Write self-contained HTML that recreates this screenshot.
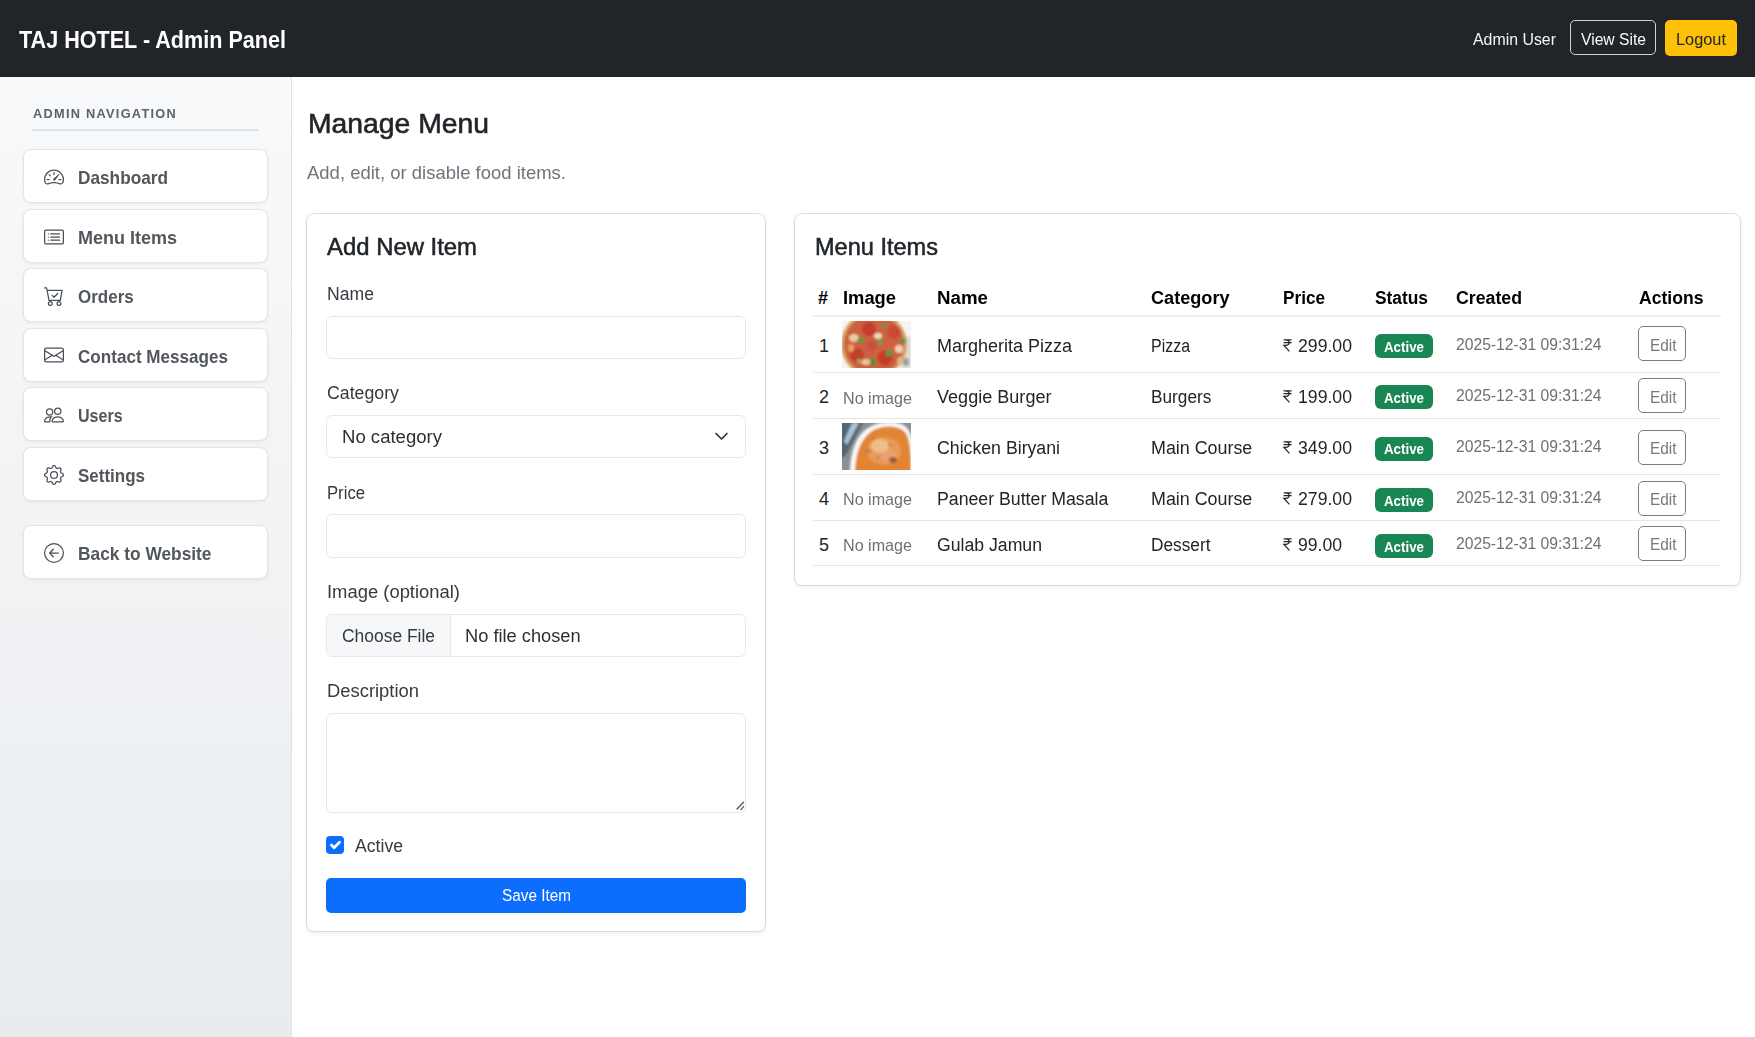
<!DOCTYPE html>
<html><head><meta charset="utf-8"><style>
html,body{margin:0;padding:0;width:1755px;height:1037px;overflow:hidden;background:#fff;}
body{position:relative;font-family:"Liberation Sans",sans-serif;}
.t{position:absolute;white-space:nowrap;line-height:1;transform-origin:0 0;}
.b{position:absolute;box-sizing:border-box;}
svg.b{overflow:visible;}
</style></head><body>
<div class="b" style="left:0px;top:0px;width:1755px;height:77px;background:#212529;"></div>
<div class="t" style="left:19.00px;top:27.88px;font-size:24px;color:#fff;font-weight:700;transform:scaleX(0.8992);">TAJ HOTEL - Admin Panel</div>
<div class="t" style="left:1473.00px;top:30.81px;font-size:17px;color:#f1f3f5;transform:scaleX(0.9346);">Admin User</div>
<div class="b" style="left:1570px;top:20px;width:86px;height:35px;border:1px solid #ced4da;border-radius:5px;box-sizing:border-box;"></div>
<div class="t" style="left:1581.00px;top:30.81px;font-size:17px;color:#f8f9fa;transform:scaleX(0.9212);">View Site</div>
<div class="b" style="left:1665px;top:20px;width:72px;height:36px;background:#ffc107;border-radius:5px;"></div>
<div class="t" style="left:1676.00px;top:30.81px;font-size:17px;color:#212529;transform:scaleX(0.9616);">Logout</div>
<div class="b" style="left:0px;top:77px;width:291px;height:960px;background:linear-gradient(#f8f9fa,#e9ecef);"></div>
<div class="b" style="left:291px;top:77px;width:1px;height:960px;background:#e2e3e5;"></div>
<div class="t" style="left:33.00px;top:106.69px;font-size:13px;color:#5c6268;font-weight:700;transform:scaleX(0.9816);letter-spacing:1.3px;">ADMIN NAVIGATION</div>
<div class="b" style="left:32px;top:129px;width:227px;height:2px;background:#dee2e6;"></div>
<div class="b" style="left:23px;top:149px;width:245px;height:54px;background:#fff;border-radius:8px;border:1px solid #e3e4e6;box-sizing:border-box;box-shadow:0 1px 3px rgba(0,0,0,.06);"></div>
<svg class="b" style="left:44px;top:167px;" width="20" height="20" viewBox="0 0 16 16"><g fill="#495057"><path d="M8 4a.5.5 0 0 1 .5.5V6a.5.5 0 0 1-1 0V4.5A.5.5 0 0 1 8 4M3.732 5.732a.5.5 0 0 1 .707 0l.915.914a.5.5 0 1 1-.708.708l-.914-.915a.5.5 0 0 1 0-.707M2 10a.5.5 0 0 1 .5-.5h1.586a.5.5 0 0 1 0 1H2.5A.5.5 0 0 1 2 10m9.5 0a.5.5 0 0 1 .5-.5h1.5a.5.5 0 0 1 0 1H12a.5.5 0 0 1-.5-.5m.754-4.246a.39.39 0 0 0-.527-.02L7.547 9.31a.91.91 0 1 0 1.302 1.258l3.434-4.297a.39.39 0 0 0-.029-.518z"/><path fill-rule="evenodd" d="M0 10a8 8 0 1 1 15.547 2.661c-.442 1.253-1.845 1.602-2.932 1.25C11.309 13.488 9.475 13 8 13c-1.474 0-3.31.488-4.615.911-1.087.352-2.49.003-2.932-1.25A8 8 0 0 1 0 10m8-7a7 7 0 0 0-6.603 9.329c.203.575.923.876 1.68.63C4.397 12.533 6.358 12 8 12s3.604.532 4.923.96c.757.245 1.477-.056 1.68-.631A7 7 0 0 0 8 3"/></g></svg>
<div class="t" style="left:78.00px;top:169.34px;font-size:18.5px;color:#51575d;font-weight:700;transform:scaleX(0.9314);">Dashboard</div>
<div class="b" style="left:23px;top:209px;width:245px;height:54px;background:#fff;border-radius:8px;border:1px solid #e3e4e6;box-sizing:border-box;box-shadow:0 1px 3px rgba(0,0,0,.06);"></div>
<svg class="b" style="left:44px;top:227px;" width="20" height="20" viewBox="0 0 16 16"><g fill="#495057"><path d="M14.5 3a.5.5 0 0 1 .5.5v9a.5.5 0 0 1-.5.5h-13a.5.5 0 0 1-.5-.5v-9a.5.5 0 0 1 .5-.5zm-13-1A1.5 1.5 0 0 0 0 3.5v9A1.5 1.5 0 0 0 1.5 14h13a1.5 1.5 0 0 0 1.5-1.5v-9A1.5 1.5 0 0 0 14.5 2z"/><path d="M5 8a.5.5 0 0 1 .5-.5h7a.5.5 0 0 1 0 1h-7A.5.5 0 0 1 5 8m0-2.5a.5.5 0 0 1 .5-.5h7a.5.5 0 0 1 0 1h-7a.5.5 0 0 1-.5-.5m0 5a.5.5 0 0 1 .5-.5h7a.5.5 0 0 1 0 1h-7a.5.5 0 0 1-.5-.5m-1-5a.5.5 0 1 1-1 0 .5.5 0 0 1 1 0M4 8a.5.5 0 1 1-1 0 .5.5 0 0 1 1 0m0 2.5a.5.5 0 1 1-1 0 .5.5 0 0 1 1 0"/></g></svg>
<div class="t" style="left:78.00px;top:228.84px;font-size:18.5px;color:#51575d;font-weight:700;transform:scaleX(0.9728);">Menu Items</div>
<div class="b" style="left:23px;top:268px;width:245px;height:54px;background:#fff;border-radius:8px;border:1px solid #e3e4e6;box-sizing:border-box;box-shadow:0 1px 3px rgba(0,0,0,.06);"></div>
<svg class="b" style="left:44px;top:286px;" width="20" height="20" viewBox="0 0 16 16"><g fill="#495057"><path d="M11.354 6.354a.5.5 0 0 0-.708-.708L8 8.293 6.854 7.146a.5.5 0 1 0-.708.708l1.5 1.5a.5.5 0 0 0 .708 0z"/><path d="M.5 1a.5.5 0 0 0 0 1h1.11l.401 1.607 1.498 7.985A.5.5 0 0 0 4 12h1a2 2 0 1 0 0 4 2 2 0 0 0 0-4h7a2 2 0 1 0 0 4 2 2 0 0 0 0-4h1a.5.5 0 0 0 .491-.408l1.5-8A.5.5 0 0 0 14.5 3H2.89l-.405-1.621A.5.5 0 0 0 2 1zm3.915 10L3.102 4h10.796l-1.313 7zM6 14a1 1 0 1 1-2 0 1 1 0 0 1 2 0m7 0a1 1 0 1 1-2 0 1 1 0 0 1 2 0"/></g></svg>
<div class="t" style="left:78.00px;top:288.34px;font-size:18.5px;color:#51575d;font-weight:700;transform:scaleX(0.9181);">Orders</div>
<div class="b" style="left:23px;top:328px;width:245px;height:54px;background:#fff;border-radius:8px;border:1px solid #e3e4e6;box-sizing:border-box;box-shadow:0 1px 3px rgba(0,0,0,.06);"></div>
<svg class="b" style="left:44px;top:345px;" width="20" height="20" viewBox="0 0 16 16"><g fill="#495057"><path d="M0 4a2 2 0 0 1 2-2h12a2 2 0 0 1 2 2v8a2 2 0 0 1-2 2H2a2 2 0 0 1-2-2zm2-1a1 1 0 0 0-1 1v.217l7 4.2 7-4.2V4a1 1 0 0 0-1-1zm13 2.383-4.708 2.825L15 11.105zm-.034 6.876-5.64-3.471L8 9.583l-1.326-.795-5.64 3.470A1 1 0 0 0 2 13h12a1 1 0 0 0 .966-.741M1 11.105l4.708-2.897L1 5.383z"/></g></svg>
<div class="t" style="left:78.00px;top:347.84px;font-size:18.5px;color:#51575d;font-weight:700;transform:scaleX(0.9234);">Contact Messages</div>
<div class="b" style="left:23px;top:387px;width:245px;height:54px;background:#fff;border-radius:8px;border:1px solid #e3e4e6;box-sizing:border-box;box-shadow:0 1px 3px rgba(0,0,0,.06);"></div>
<svg class="b" style="left:44px;top:405px;" width="20" height="20" viewBox="0 0 16 16"><g fill="#495057"><path d="M15 14s1 0 1-1-1-4-5-4-5 3-5 4 1 1 1 1zm-7.978-1L7 12.996c.001-.264.167-1.03.76-1.72C8.312 10.629 9.282 10 11 10c1.717 0 2.687.63 3.24 1.276.593.69.758 1.457.76 1.72l-.008.002-.014.002zM11 7a2 2 0 1 0 0-4 2 2 0 0 0 0 4m3-2a3 3 0 1 1-6 0 3 3 0 0 1 6 0M6.936 9.28a6 6 0 0 0-1.23-.247A7 7 0 0 0 5 9c-4 0-5 3-5 4q0 1 1 1h4.216A2.240 2.240 0 0 1 5 13c0-1.010.377-2.042 1.090-2.904.243-.294.526-.569.846-.816M4.920 10A5.500 5.500 0 0 0 4 13H1c0-.26.164-1.030.760-1.724.545-.636 1.492-1.256 3.160-1.275ZM1.500 5.500a3 3 0 1 1 6 0 3 3 0 0 1-6 0m3-2a2 2 0 1 0 0 4 2 2 0 0 0 0-4"/></g></svg>
<div class="t" style="left:78.00px;top:407.34px;font-size:18.5px;color:#51575d;font-weight:700;transform:scaleX(0.8672);">Users</div>
<div class="b" style="left:23px;top:447px;width:245px;height:54px;background:#fff;border-radius:8px;border:1px solid #e3e4e6;box-sizing:border-box;box-shadow:0 1px 3px rgba(0,0,0,.06);"></div>
<svg class="b" style="left:44px;top:465px;" width="20" height="20" viewBox="0 0 16 16"><g fill="#495057"><path d="M8 4.754a3.246 3.246 0 1 0 0 6.492 3.246 3.246 0 0 0 0-6.492M5.754 8a2.246 2.246 0 1 1 4.492 0 2.246 2.246 0 0 1-4.492 0"/><path d="M9.796 1.343c-.527-1.790-3.065-1.790-3.592 0l-.094.319a.873.873 0 0 1-1.255.52l-.292-.16c-1.640-.892-3.433.902-2.540 2.541l.159.292a.873.873 0 0 1-.52 1.255l-.319.094c-1.790.527-1.790 3.065 0 3.592l.319.094a.873.873 0 0 1 .52 1.255l-.16.292c-.892 1.640.901 3.434 2.541 2.540l.292-.159a.873.873 0 0 1 1.255.52l.094.319c.527 1.790 3.065 1.790 3.592 0l.094-.319a.873.873 0 0 1 1.255-.52l.292.16c1.640.893 3.434-.902 2.540-2.541l-.159-.292a.873.873 0 0 1 .52-1.255l.319-.094c1.790-.527 1.790-3.065 0-3.592l-.319-.094a.873.873 0 0 1-.52-1.255l.16-.292c.893-1.640-.902-3.433-2.541-2.540l-.292.159a.873.873 0 0 1-1.255-.52zm-2.633.283c.246-.835 1.428-.835 1.674 0l.094.319a1.873 1.873 0 0 0 2.693 1.115l.291-.16c.764-.415 1.6.42 1.184 1.185l-.159.292a1.873 1.873 0 0 0 1.116 2.692l.318.094c.835.246.835 1.428 0 1.674l-.319.094a1.873 1.873 0 0 0-1.115 2.693l.16.291c.415.764-.42 1.6-1.185 1.184l-.291-.159a1.873 1.873 0 0 0-2.693 1.116l-.094.318c-.246.835-1.428.835-1.674 0l-.094-.319a1.873 1.873 0 0 0-2.692-1.115l-.292.16c-.764.415-1.6-.42-1.184-1.185l.159-.291A1.873 1.873 0 0 0 1.945 8.930l-.319-.094c-.835-.246-.835-1.428 0-1.674l.319-.094A1.873 1.873 0 0 0 3.060 4.377l-.16-.292c-.415-.764.42-1.6 1.185-1.184l.292.159a1.873 1.873 0 0 0 2.692-1.115z"/></g></svg>
<div class="t" style="left:78.00px;top:466.84px;font-size:18.5px;color:#51575d;font-weight:700;transform:scaleX(0.9180);">Settings</div>
<div class="b" style="left:23px;top:525px;width:245px;height:54px;background:#fff;border-radius:8px;border:1px solid #e3e4e6;box-sizing:border-box;box-shadow:0 1px 3px rgba(0,0,0,.06);"></div>
<svg class="b" style="left:44px;top:543px;" width="20" height="20" viewBox="0 0 16 16"><g fill="#495057"><path fill-rule="evenodd" d="M1 8a7 7 0 1 0 14 0A7 7 0 0 0 1 8m15 0A8 8 0 1 1 0 8a8 8 0 0 1 16 0m-4.5-.5a.5.5 0 0 1 0 1H5.707l2.147 2.146a.5.5 0 0 1-.708.708l-3-3a.5.5 0 0 1 0-.708l3-3a.5.5 0 1 1 .708.708L5.707 7.5z"/></g></svg>
<div class="t" style="left:78.00px;top:544.84px;font-size:18.5px;color:#51575d;font-weight:700;transform:scaleX(0.9364);">Back to Website</div>
<div class="t" style="left:308.00px;top:109.37px;font-size:28.5px;color:#212529;transform:scaleX(0.9934);-webkit-text-stroke:0.6px #212529;">Manage Menu</div>
<div class="t" style="left:307.00px;top:162.61px;font-size:19px;color:#6c757d;transform:scaleX(0.9731);">Add, edit, or disable food items.</div>
<div class="b" style="left:306px;top:213px;width:460px;height:719px;background:#fff;border:1px solid #dcdcdc;border-radius:8px;box-sizing:border-box;box-shadow:0 2px 4px rgba(0,0,0,.06);"></div>
<div class="t" style="left:327.00px;top:235.63px;font-size:23px;color:#212529;transform:scaleX(1.0384);-webkit-text-stroke:0.5px #212529;">Add New Item</div>
<div class="t" style="left:327.00px;top:285.88px;font-size:17.5px;color:#343a40;transform:scaleX(1.0068);">Name</div>
<div class="t" style="left:327.00px;top:384.88px;font-size:17.5px;color:#343a40;transform:scaleX(1.0139);">Category</div>
<div class="t" style="left:327.00px;top:484.88px;font-size:17.5px;color:#343a40;transform:scaleX(0.9530);">Price</div>
<div class="t" style="left:327.00px;top:583.88px;font-size:17.5px;color:#343a40;transform:scaleX(1.0517);">Image (optional)</div>
<div class="t" style="left:327.00px;top:683.48px;font-size:17.5px;color:#343a40;transform:scaleX(1.0510);">Description</div>
<div class="b" style="left:326px;top:316px;width:420px;height:43px;background:#fff;border:1px solid #e8e8e8;border-radius:6px;box-sizing:border-box;"></div>
<div class="b" style="left:326px;top:415px;width:420px;height:43px;background:#fff;border:1px solid #e8e8e8;border-radius:6px;box-sizing:border-box;"></div>
<div class="t" style="left:342.00px;top:429.48px;font-size:17.5px;color:#2b3035;transform:scaleX(1.0598);">No category</div>
<svg class="b" style="left:715px;top:432px;" width="13" height="9" viewBox="0 0 13 9"><path fill="none" stroke="#333" stroke-linecap="round" stroke-linejoin="round" stroke-width="1.7" d="M1 1.5 6.5 7 12 1.5"/></svg>
<div class="b" style="left:326px;top:514px;width:420px;height:44px;background:#fff;border:1px solid #e8e8e8;border-radius:6px;box-sizing:border-box;"></div>
<div class="b" style="left:326px;top:614px;width:420px;height:43px;background:#fff;border:1px solid #e8e8e8;border-radius:6px;box-sizing:border-box;overflow:hidden;"><div style="position:absolute;left:0;top:0;width:124px;height:100%;background:#f6f7f8;border-right:1px solid #e6e6e6;box-sizing:border-box;"></div></div>
<div class="t" style="left:341.50px;top:627.88px;font-size:17.5px;color:#343a40;transform:scaleX(0.9959);">Choose File</div>
<div class="t" style="left:465.00px;top:627.88px;font-size:17.5px;color:#2b3035;transform:scaleX(1.0424);">No file chosen</div>
<div class="b" style="left:326px;top:713px;width:420px;height:100px;background:#fff;border:1px solid #e8e8e8;border-radius:6px;box-sizing:border-box;"></div>
<svg class="b" style="left:736px;top:801px;" width="9" height="9" viewBox="0 0 9 9"><path d="M1 8 7.5 1.3M5 8.6 7.6 5.6" stroke="#555" stroke-width="1.3" stroke-linecap="round"/></svg>
<div class="b" style="left:326px;top:836px;width:18px;height:18px;background:#0d6efd;border-radius:4px;"></div>
<svg class="b" style="left:326px;top:836px;" width="18" height="18" viewBox="0 0 20 20"><path fill="none" stroke="#fff" stroke-linecap="round" stroke-linejoin="round" stroke-width="3" d="m6 10 3 3 6-6"/></svg>
<div class="t" style="left:355.00px;top:837.88px;font-size:17.5px;color:#343a40;transform:scaleX(1.0072);">Active</div>
<div class="b" style="left:326px;top:878px;width:420px;height:35px;background:#0d6efd;border-radius:5px;"></div>
<div class="t" style="left:502.00px;top:887.98px;font-size:16.8px;color:#fff;transform:scaleX(0.9123);">Save Item</div>
<div class="b" style="left:794px;top:213px;width:947px;height:373px;background:#fff;border:1px solid #dcdcdc;border-radius:8px;box-sizing:border-box;box-shadow:0 2px 4px rgba(0,0,0,.06);"></div>
<div class="t" style="left:815.00px;top:235.83px;font-size:23px;color:#212529;transform:scaleX(1.0237);-webkit-text-stroke:0.5px #212529;">Menu Items</div>
<div class="t" style="left:818.00px;top:289.26px;font-size:18px;color:#000;font-weight:700;">#</div>
<div class="t" style="left:843.00px;top:289.26px;font-size:18px;color:#000;font-weight:700;transform:scaleX(1.0188);">Image</div>
<div class="t" style="left:936.50px;top:289.26px;font-size:18px;color:#000;font-weight:700;transform:scaleX(1.0403);">Name</div>
<div class="t" style="left:1151.00px;top:289.26px;font-size:18px;color:#000;font-weight:700;transform:scaleX(1.0061);">Category</div>
<div class="t" style="left:1283.00px;top:289.26px;font-size:18px;color:#000;font-weight:700;transform:scaleX(0.9538);">Price</div>
<div class="t" style="left:1375.00px;top:289.26px;font-size:18px;color:#000;font-weight:700;transform:scaleX(0.9634);">Status</div>
<div class="t" style="left:1455.50px;top:289.26px;font-size:18px;color:#000;font-weight:700;transform:scaleX(0.9847);">Created</div>
<div class="t" style="left:1639.00px;top:289.26px;font-size:18px;color:#000;font-weight:700;transform:scaleX(0.9772);">Actions</div>
<div class="b" style="left:813px;top:315px;width:908px;height:2px;background:#efefef;"></div>
<div class="b" style="left:813px;top:372px;width:908px;height:1px;background:#e6e6e6;"></div>
<div class="b" style="left:813px;top:418px;width:908px;height:1px;background:#e6e6e6;"></div>
<div class="b" style="left:813px;top:474px;width:908px;height:1px;background:#e6e6e6;"></div>
<div class="b" style="left:813px;top:520px;width:908px;height:1px;background:#e6e6e6;"></div>
<div class="b" style="left:813px;top:565px;width:908px;height:1px;background:#e6e6e6;"></div>
<div class="t" style="left:819.00px;top:337.46px;font-size:18px;color:#212529;">1</div>
<div class="t" style="left:936.50px;top:337.46px;font-size:18px;color:#212529;transform:scaleX(0.9996);">Margherita Pizza</div>
<div class="t" style="left:1151.00px;top:337.46px;font-size:18px;color:#212529;transform:scaleX(0.8860);">Pizza</div>
<svg class="b" style="left:1283px;top:339px;" width="9" height="13" viewBox="0 0 9 13"><path d="M0.6 0.8H8.6M0.6 3.6H8.6M0.6 0.8H2.6C5 0.8 6.1 2 6.1 3.6S5 6.4 2.6 6.4H0.9L6.4 12.4" fill="none" stroke="#212529" stroke-width="1.25"/></svg>
<div class="t" style="left:1298.00px;top:337.46px;font-size:18px;color:#212529;transform:scaleX(0.9808);">299.00</div>
<div class="b" style="left:1374.5px;top:334px;width:58.5px;height:24px;background:#198754;border-radius:6px;"></div>
<div class="t" style="left:1384.00px;top:339.85px;font-size:14px;color:#fff;font-weight:700;transform:scaleX(0.9519);">Active</div>
<div class="t" style="left:1455.50px;top:336.11px;font-size:17px;color:#6d7176;transform:scaleX(0.9217);">2025-12-31 09:31:24</div>
<div class="b" style="left:1638px;top:326px;width:48px;height:35px;border:1px solid #7a7e83;border-radius:5px;box-sizing:border-box;"></div>
<div class="t" style="left:1649.50px;top:337.65px;font-size:16px;color:#75797e;transform:scaleX(0.9611);">Edit</div>
<div class="t" style="left:819.00px;top:388.46px;font-size:18px;color:#212529;">2</div>
<div class="t" style="left:843.00px;top:389.81px;font-size:17px;color:#6d7176;transform:scaleX(0.9483);">No image</div>
<div class="t" style="left:936.50px;top:388.46px;font-size:18px;color:#212529;transform:scaleX(1.0036);">Veggie Burger</div>
<div class="t" style="left:1151.00px;top:388.46px;font-size:18px;color:#212529;transform:scaleX(0.9567);">Burgers</div>
<svg class="b" style="left:1283px;top:390px;" width="9" height="13" viewBox="0 0 9 13"><path d="M0.6 0.8H8.6M0.6 3.6H8.6M0.6 0.8H2.6C5 0.8 6.1 2 6.1 3.6S5 6.4 2.6 6.4H0.9L6.4 12.4" fill="none" stroke="#212529" stroke-width="1.25"/></svg>
<div class="t" style="left:1298.00px;top:388.46px;font-size:18px;color:#212529;transform:scaleX(0.9808);">199.00</div>
<div class="b" style="left:1374.5px;top:385px;width:58.5px;height:24px;background:#198754;border-radius:6px;"></div>
<div class="t" style="left:1384.00px;top:390.85px;font-size:14px;color:#fff;font-weight:700;transform:scaleX(0.9519);">Active</div>
<div class="t" style="left:1455.50px;top:387.11px;font-size:17px;color:#6d7176;transform:scaleX(0.9217);">2025-12-31 09:31:24</div>
<div class="b" style="left:1638px;top:378px;width:48px;height:35px;border:1px solid #7a7e83;border-radius:5px;box-sizing:border-box;"></div>
<div class="t" style="left:1649.50px;top:389.65px;font-size:16px;color:#75797e;transform:scaleX(0.9611);">Edit</div>
<div class="t" style="left:819.00px;top:439.46px;font-size:18px;color:#212529;">3</div>
<div class="t" style="left:936.50px;top:439.46px;font-size:18px;color:#212529;transform:scaleX(0.9836);">Chicken Biryani</div>
<div class="t" style="left:1151.00px;top:439.46px;font-size:18px;color:#212529;transform:scaleX(0.9927);">Main Course</div>
<svg class="b" style="left:1283px;top:441px;" width="9" height="13" viewBox="0 0 9 13"><path d="M0.6 0.8H8.6M0.6 3.6H8.6M0.6 0.8H2.6C5 0.8 6.1 2 6.1 3.6S5 6.4 2.6 6.4H0.9L6.4 12.4" fill="none" stroke="#212529" stroke-width="1.25"/></svg>
<div class="t" style="left:1298.00px;top:439.46px;font-size:18px;color:#212529;transform:scaleX(0.9808);">349.00</div>
<div class="b" style="left:1374.5px;top:436.5px;width:58.5px;height:24.0px;background:#198754;border-radius:6px;"></div>
<div class="t" style="left:1384.00px;top:442.35px;font-size:14px;color:#fff;font-weight:700;transform:scaleX(0.9519);">Active</div>
<div class="t" style="left:1455.50px;top:438.11px;font-size:17px;color:#6d7176;transform:scaleX(0.9217);">2025-12-31 09:31:24</div>
<div class="b" style="left:1638px;top:429.5px;width:48px;height:35.0px;border:1px solid #7a7e83;border-radius:5px;box-sizing:border-box;"></div>
<div class="t" style="left:1649.50px;top:441.15px;font-size:16px;color:#75797e;transform:scaleX(0.9611);">Edit</div>
<div class="t" style="left:819.00px;top:489.96px;font-size:18px;color:#212529;">4</div>
<div class="t" style="left:843.00px;top:491.31px;font-size:17px;color:#6d7176;transform:scaleX(0.9483);">No image</div>
<div class="t" style="left:936.50px;top:489.96px;font-size:18px;color:#212529;transform:scaleX(0.9839);">Paneer Butter Masala</div>
<div class="t" style="left:1151.00px;top:489.96px;font-size:18px;color:#212529;transform:scaleX(0.9927);">Main Course</div>
<svg class="b" style="left:1283px;top:491.5px;" width="9" height="13" viewBox="0 0 9 13"><path d="M0.6 0.8H8.6M0.6 3.6H8.6M0.6 0.8H2.6C5 0.8 6.1 2 6.1 3.6S5 6.4 2.6 6.4H0.9L6.4 12.4" fill="none" stroke="#212529" stroke-width="1.25"/></svg>
<div class="t" style="left:1298.00px;top:489.96px;font-size:18px;color:#212529;transform:scaleX(0.9808);">279.00</div>
<div class="b" style="left:1374.5px;top:488px;width:58.5px;height:24px;background:#198754;border-radius:6px;"></div>
<div class="t" style="left:1384.00px;top:493.85px;font-size:14px;color:#fff;font-weight:700;transform:scaleX(0.9519);">Active</div>
<div class="t" style="left:1455.50px;top:488.61px;font-size:17px;color:#6d7176;transform:scaleX(0.9217);">2025-12-31 09:31:24</div>
<div class="b" style="left:1638px;top:480.5px;width:48px;height:35.0px;border:1px solid #7a7e83;border-radius:5px;box-sizing:border-box;"></div>
<div class="t" style="left:1649.50px;top:492.15px;font-size:16px;color:#75797e;transform:scaleX(0.9611);">Edit</div>
<div class="t" style="left:819.00px;top:535.96px;font-size:18px;color:#212529;">5</div>
<div class="t" style="left:843.00px;top:537.31px;font-size:17px;color:#6d7176;transform:scaleX(0.9483);">No image</div>
<div class="t" style="left:936.50px;top:535.96px;font-size:18px;color:#212529;transform:scaleX(0.9807);">Gulab Jamun</div>
<div class="t" style="left:1151.00px;top:535.96px;font-size:18px;color:#212529;transform:scaleX(0.9594);">Dessert</div>
<svg class="b" style="left:1283px;top:537.5px;" width="9" height="13" viewBox="0 0 9 13"><path d="M0.6 0.8H8.6M0.6 3.6H8.6M0.6 0.8H2.6C5 0.8 6.1 2 6.1 3.6S5 6.4 2.6 6.4H0.9L6.4 12.4" fill="none" stroke="#212529" stroke-width="1.25"/></svg>
<div class="t" style="left:1298.00px;top:535.96px;font-size:18px;color:#212529;transform:scaleX(0.9768);">99.00</div>
<div class="b" style="left:1374.5px;top:534px;width:58.5px;height:24px;background:#198754;border-radius:6px;"></div>
<div class="t" style="left:1384.00px;top:539.85px;font-size:14px;color:#fff;font-weight:700;transform:scaleX(0.9519);">Active</div>
<div class="t" style="left:1455.50px;top:534.61px;font-size:17px;color:#6d7176;transform:scaleX(0.9217);">2025-12-31 09:31:24</div>
<div class="b" style="left:1638px;top:525.5px;width:48px;height:35.0px;border:1px solid #7a7e83;border-radius:5px;box-sizing:border-box;"></div>
<div class="t" style="left:1649.50px;top:537.15px;font-size:16px;color:#75797e;transform:scaleX(0.9611);">Edit</div>
<svg class="b" style="left:842px;top:321px;" width="69" height="47" viewBox="0 0 69 47"><defs><filter id="bl1" x="-10%" y="-10%" width="120%" height="120%"><feGaussianBlur stdDeviation="1.1"/></filter><clipPath id="cp1"><rect width="69" height="47"/></clipPath></defs>
<g clip-path="url(#cp1)"><rect width="69" height="47" fill="#f6f4f2"/>
<g filter="url(#bl1)">
<path d="M62 14 L69 16 L69 47 L58 47Z" fill="#dedbd8"/>
<ellipse cx="64" cy="41" rx="3" ry="4" fill="#9a9ca0"/>
<ellipse cx="32" cy="23.5" rx="33" ry="33" fill="#d9a262"/>
<ellipse cx="32" cy="23.5" rx="30" ry="30" fill="#cc6040"/>
<circle cx="27" cy="8" r="7" fill="#c23e2e"/><circle cx="52" cy="11" r="6.5" fill="#c94a34"/>
<circle cx="15" cy="34" r="7" fill="#c4412e"/><circle cx="43" cy="37" r="7.5" fill="#c53c2c"/>
<circle cx="50" cy="25" r="5" fill="#d4604a"/><circle cx="30" cy="25" r="5" fill="#c9513a"/>
<ellipse cx="12" cy="17" rx="5" ry="4" fill="#eccaa4"/><ellipse cx="36" cy="15" rx="4" ry="3" fill="#f0d8bc"/>
<ellipse cx="57" cy="28" rx="4" ry="4" fill="#ecd0b6"/><ellipse cx="24" cy="41" rx="5" ry="3" fill="#e8c4a2"/>
<ellipse cx="9" cy="27" rx="3" ry="4" fill="#e6a054"/><ellipse cx="58" cy="40" rx="3" ry="4" fill="#e0b880"/>
<ellipse cx="19" cy="19" rx="3.5" ry="2.5" fill="#4f9a3a"/><ellipse cx="38" cy="21" rx="2.5" ry="3" fill="#6aa24a"/>
<ellipse cx="47" cy="32" rx="3.5" ry="3" fill="#4e9c3c"/><ellipse cx="31" cy="41" rx="3" ry="3.5" fill="#479434"/>
<ellipse cx="42" cy="5" rx="2.5" ry="2.5" fill="#5a9a3e"/><ellipse cx="61" cy="20" rx="3" ry="2.5" fill="#4f9a3a"/>
<ellipse cx="17" cy="40" rx="2" ry="2" fill="#8ab060"/>
</g></g></svg>
<svg class="b" style="left:842px;top:423px;" width="69" height="47" viewBox="0 0 69 47"><defs><filter id="bl2" x="-10%" y="-10%" width="120%" height="120%"><feGaussianBlur stdDeviation="1"/></filter><clipPath id="cp2"><rect width="69" height="47"/></clipPath></defs>
<g clip-path="url(#cp2)"><rect width="69" height="47" fill="#8c9096"/>
<g filter="url(#bl2)">
<path d="M-2 -2 L22 -2 L4 32 L-2 36Z" fill="#56636f"/>
<path d="M10 0 L17 0 L5 22 L2 18Z" fill="#a9c2d6"/>
<path d="M8 50 C8 30 14 8 32 2 C44 -3 58 -1 64 4 C70 9 72 22 72 50Z" fill="#f7f7f7"/>
<path d="M13 50 C13 32 19 12 34 6 C44 2 56 3 62 8 C67 13 69 24 69 50Z" fill="#e38432"/>
<ellipse cx="42" cy="28" rx="17" ry="14" fill="#e99a58"/>
<ellipse cx="38" cy="23" rx="9" ry="7" fill="#f0bd88"/>
<ellipse cx="47" cy="33" rx="8" ry="6" fill="#eaa270"/>
<ellipse cx="51" cy="37" rx="4" ry="3" fill="#a35a38"/>
<ellipse cx="26" cy="28" rx="3" ry="1.5" fill="#9a8a40"/>
<circle cx="31" cy="16" r="1.3" fill="#7a8a3a"/><circle cx="48" cy="22" r="1.3" fill="#7a8a3a"/><circle cx="36" cy="35" r="1.2" fill="#8a8a3a"/>
</g></g></svg>
</body></html>
